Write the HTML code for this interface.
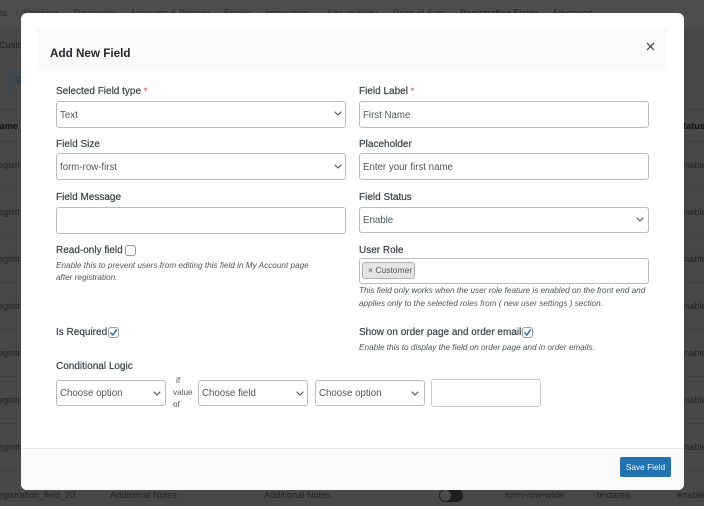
<!DOCTYPE html>
<html><head><meta charset="utf-8"><style>
*{box-sizing:border-box}
html,body{margin:0;padding:0}
body{width:704px;height:506px;overflow:hidden;position:relative;background:#484848;font-family:"Liberation Sans",sans-serif;color:#3b3b3b}
.a{position:absolute;white-space:nowrap}
.bg{color:#222;font-size:9.2px;line-height:14px}
.rl{position:absolute;left:0;width:704px;height:1px;background:#404040}
.modal{position:absolute;left:21px;top:13px;width:663px;height:477px;background:#fff;border-radius:6px;overflow:hidden}
.l{position:absolute;white-space:nowrap;font-size:10px;line-height:14px;color:#3c434a;-webkit-text-stroke:.2px #3c434a;margin-top:1px}
.box{position:absolute;height:27px;background:#fff;border:1px solid #bcbcbc;border-radius:3px;font-size:9.7px;line-height:27px;padding-left:3px;color:#50575e;white-space:nowrap}
.h{position:absolute;white-space:nowrap;font-size:8.2px;line-height:13px;font-style:italic;color:#50575e}
.s{color:#d63638;font-size:9px;-webkit-text-stroke:0}
.chev{position:absolute;width:8px;height:5px}
.cb{position:absolute;width:11px;height:11px;border:1px solid #999;border-radius:3px;background:#fff}
</style></head><body>
<div class="a bg" style="left:0;top:6px">ts</div>
<div class="a bg" style="left:23px;top:6px">Shipping</div>
<div class="a bg" style="left:74px;top:6px">Payments</div>
<div class="a bg" style="left:130px;top:6px">Accounts &amp; Privacy</div>
<div class="a bg" style="left:224px;top:6px">Emails</div>
<div class="a bg" style="left:265px;top:6px">Integration</div>
<div class="a bg" style="left:327px;top:6px">Site visibility</div>
<div class="a bg" style="left:393px;top:6px">Point of Sale</div>
<div class="a bg" style="left:460px;top:6px;font-weight:bold;font-size:8.8px">Registration Fields</div>
<div class="a bg" style="left:552px;top:6px">Advanced</div>
<div class="a" style="left:0;top:0;width:704px;height:27px;background:rgba(255,255,255,.03)"></div>
<div class="a bg" style="left:-1px;top:38px">Custom</div>
<div class="a" style="left:10px;top:72px;width:30px;height:20px;border:1px solid #2b4a63;border-radius:3px;color:#1d3f5c;font-size:10px;font-weight:bold;line-height:18px;padding-left:5px">B</div>
<div class="rl" style="top:109px"></div><div class="rl" style="top:141px"></div>
<div class="rl" style="top:188px"></div><div class="rl" style="top:235px"></div>
<div class="rl" style="top:282px"></div><div class="rl" style="top:329px"></div>
<div class="rl" style="top:376px"></div><div class="rl" style="top:423px"></div><div class="rl" style="top:470px"></div>
<div class="a bg" style="left:-7px;top:119px;color:#111;font-weight:bold">Name</div>
<div class="a bg" style="left:-5px;top:158px">registr</div>
<div class="a bg" style="left:-5px;top:205px">registr</div>
<div class="a bg" style="left:-5px;top:252px">registr</div>
<div class="a bg" style="left:-5px;top:299px">registr</div>
<div class="a bg" style="left:-5px;top:346px">registr</div>
<div class="a bg" style="left:-5px;top:393px">registr</div>
<div class="a bg" style="left:-5px;top:440px">registr</div>
<div class="a bg" style="left:683px;top:119px;color:#111;font-weight:bold">tatus</div>
<div class="a bg" style="left:684px;top:158px">nable</div>
<div class="a bg" style="left:684px;top:205px">nable</div>
<div class="a bg" style="left:684px;top:252px">nable</div>
<div class="a bg" style="left:684px;top:299px">nable</div>
<div class="a bg" style="left:684px;top:346px">nable</div>
<div class="a bg" style="left:684px;top:393px">nable</div>
<div class="a bg" style="left:684px;top:440px">nable</div>
<div class="a bg" style="left:-5px;top:488px;font-size:8.9px">registration_field_20</div>
<div class="a bg" style="left:110px;top:488px">Additional Notes</div>
<div class="a bg" style="left:264px;top:488px">Additional Notes</div>
<div class="a" style="left:439px;top:489px;width:24px;height:13px;border-radius:7px;background:#1e1e1e"><div style="position:absolute;left:1px;top:1px;width:11px;height:11px;border-radius:50%;background:#4a4a4a"></div></div>
<div class="a bg" style="left:505px;top:488px;font-size:9.4px">form-row-wide</div>
<div class="a bg" style="left:597px;top:488px">textarea</div>
<div class="a bg" style="left:677px;top:488px">enable</div>

<div class="modal">
 <div class="a" style="left:16px;top:16px;width:630px;height:42px;background:#fafafa"></div>
 <div class="a" style="left:29px;top:33px;font-size:11.7px;line-height:16px;font-weight:bold;color:#23282d">Add New Field</div>
 <svg class="a" style="left:625px;top:29px" width="9" height="9" viewBox="0 0 9 9"><path d="M1 1L8 8M8 1L1 8" stroke="#555" stroke-width="1.4" fill="none"/></svg>

 <div class="l" style="left:35px;top:70px">Selected Field type <span class="s">*</span></div>
 <div class="box" style="left:35px;top:88px;width:290px">Text</div>
 <svg class="chev" style="left:313px;top:98px" viewBox="0 0 8 5"><path d="M.7 .7L4 4L7.3 .7" stroke="#555" stroke-width="1.1" fill="none"/></svg>

 <div class="l" style="left:338px;top:70px">Field Label <span class="s">*</span></div>
 <div class="box" style="left:338px;top:88px;width:290px">First Name</div>

 <div class="l" style="left:35px;top:124px">Field Size</div>
 <div class="box" style="left:35px;top:140px;width:290px">form-row-first</div>
 <svg class="chev" style="left:313px;top:151px" viewBox="0 0 8 5"><path d="M.7 .7L4 4L7.3 .7" stroke="#555" stroke-width="1.1" fill="none"/></svg>

 <div class="l" style="left:338px;top:124px">Placeholder</div>
 <div class="box" style="left:338px;top:140px;width:290px">Enter your first name</div>

 <div class="l" style="left:35px;top:177px">Field Message</div>
 <div class="box" style="left:35px;top:194px;width:290px"></div>

 <div class="l" style="left:338px;top:177px">Field Status</div>
 <div class="box" style="left:338px;top:194px;width:290px;height:26px;line-height:26px">Enable</div>
 <svg class="chev" style="left:615px;top:204px" viewBox="0 0 8 5"><path d="M.7 .7L4 4L7.3 .7" stroke="#555" stroke-width="1.1" fill="none"/></svg>

 <div class="l" style="left:35px;top:230px">Read-only field</div>
 <div class="cb" style="left:104px;top:232px"></div>
 <div class="h" style="left:35px;top:246px">Enable this to prevent users from editing this field in My Account page</div>
 <div class="h" style="left:35px;top:258px">after registration.</div>

 <div class="l" style="left:338px;top:230px">User Role</div>
 <div class="box" style="left:338px;top:245px;width:290px;height:26px"></div>
 <div class="a" style="left:341px;top:249px;width:53px;height:17px;background:#e4e4e4;border:1px solid #b0b0b0;border-radius:3px;font-size:8.5px;line-height:15px;padding-left:5px;color:#50575e">× Customer</div>
 <div class="h" style="left:338px;top:271px">This field only works when the user role feature is enabled on the front end and</div>
 <div class="h" style="left:338px;top:284px">applies only to the selected roles from ( new user settings ) section.</div>

 <div class="l" style="left:35px;top:312px">Is Required</div>
 <div class="cb" style="left:87px;top:314px"></div>
 <svg class="a" style="left:88px;top:315px" width="9" height="9" viewBox="0 0 9 9"><path d="M1.5 4.5L3.8 7L7.8 1.5" stroke="#2271b1" stroke-width="1.5" fill="none"/></svg>

 <div class="l" style="left:338px;top:312px">Show on order page and order email</div>
 <div class="cb" style="left:501px;top:314px"></div>
 <svg class="a" style="left:502px;top:315px" width="9" height="9" viewBox="0 0 9 9"><path d="M1.5 4.5L3.8 7L7.8 1.5" stroke="#2271b1" stroke-width="1.5" fill="none"/></svg>
 <div class="h" style="left:338px;top:328px">Enable this to display the field on order page and in order emails.</div>

 <div class="l" style="left:35px;top:346px">Conditional Logic</div>
 <div class="box" style="left:35px;top:367px;width:110px;height:26px;line-height:26px">Choose option</div>
 <svg class="chev" style="left:132px;top:378px" viewBox="0 0 8 5"><path d="M.7 .7L4 4L7.3 .7" stroke="#555" stroke-width="1.1" fill="none"/></svg>
 <div class="a" style="left:152px;top:362px;font-size:8.2px;line-height:12px;color:#50575e"><span style="padding-left:3px">if</span><br>value<br>of</div>
 <div class="box" style="left:177px;top:367px;width:110px;height:26px;line-height:26px">Choose field</div>
 <svg class="chev" style="left:275px;top:378px" viewBox="0 0 8 5"><path d="M.7 .7L4 4L7.3 .7" stroke="#555" stroke-width="1.1" fill="none"/></svg>
 <div class="box" style="left:294px;top:367px;width:110px;height:26px;line-height:26px">Choose option</div>
 <svg class="chev" style="left:390px;top:378px" viewBox="0 0 8 5"><path d="M.7 .7L4 4L7.3 .7" stroke="#555" stroke-width="1.1" fill="none"/></svg>
 <div class="box" style="left:410px;top:366px;width:110px;height:28px;border-color:#c8c8c8"></div>

 <div class="a" style="left:0;top:435px;width:663px;height:42px;background:#fafafa;border-top:1px solid #e8e8e8"></div>
 <div class="a" style="left:599px;top:444px;width:51px;height:20px;background:#2271b1;border-radius:2px;color:#fff;font-size:8.3px;line-height:20px;text-align:center">Save Field</div>
</div>
</body></html>
